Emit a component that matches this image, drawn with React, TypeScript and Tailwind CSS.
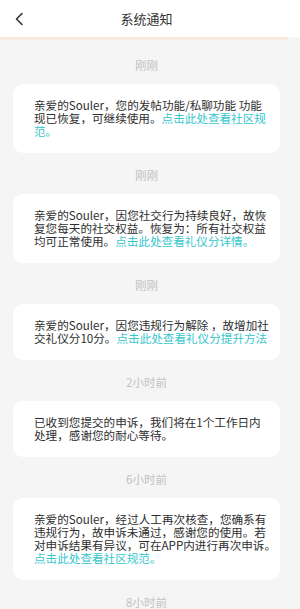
import React from "react";

type Seg = { t: string; link?: boolean };
type Line = Seg[];

const cards: { time: string; lines: Line[] }[] = [
  {
    time: "刚刚",
    lines: [
      [{ t: "亲爱的Souler，您的发帖功能/私聊功能 功能" }],
      [{ t: "现已恢复，可继续使用。" }, { t: "点击此处查看社区规", link: true }],
      [{ t: "范。", link: true }],
    ],
  },
  {
    time: "刚刚",
    lines: [
      [{ t: "亲爱的Souler，因您社交行为持续良好，故恢" }],
      [{ t: "复您每天的社交权益。恢复为：所有社交权益" }],
      [{ t: "均可正常使用。" }, { t: "点击此处查看礼仪分详情。", link: true }],
    ],
  },
  {
    time: "刚刚",
    lines: [
      [{ t: "亲爱的Souler，因您违规行为解除 ，故增加社" }],
      [{ t: "交礼仪分10分。" }, { t: "点击此处查看礼仪分提升方法", link: true }],
    ],
  },
  {
    time: "2小时前",
    lines: [
      [{ t: "已收到您提交的申诉，我们将在1个工作日内" }],
      [{ t: "处理，感谢您的耐心等待。" }],
    ],
  },
  {
    time: "6小时前",
    lines: [
      [{ t: "亲爱的Souler，经过人工再次核查，您确系有" }],
      [{ t: "违规行为，故申诉未通过，感谢您的使用。若" }],
      [{ t: "对申诉结果有异议，可在APP内进行再次申诉。" }],
      [{ t: "点击此处查看社区规范。", link: true }],
    ],
  },
];

const font = { fontFamily: '"Noto Sans CJK SC", "Noto Sans", sans-serif' };

export default function App() {
  return (
    <div
      className="w-[300px] h-[609px] overflow-hidden bg-[#f5f5f5]"
      style={font}
    >
      <div className="w-[300px] h-[37px] bg-white flex items-center relative">
        <div className="w-[293px] h-[37px] flex items-center justify-center">
          <span className="text-[13px] leading-[13px] text-[#333333]">系统通知</span>
        </div>
        <svg
          className="absolute left-[13px] top-[12px]"
          width="12"
          height="14"
          viewBox="0 0 12 14"
          fill="none"
        >
          <polyline
            points="9,1.5 3.5,7 9,12.5"
            stroke="#333333"
            strokeWidth="1.6"
            strokeLinecap="round"
            strokeLinejoin="round"
          />
        </svg>
      </div>
      <div className="w-[288px] h-[4px] bg-gradient-to-b from-[#fce3d2] to-[#f5f5f5]" />
      <div className="w-[293px] flex flex-col pt-[18px]">
        {cards.map((c, i) => (
          <div key={i} className={i === 0 ? "flex flex-col" : "flex flex-col mt-[16px]"}>
            <div className="h-[12px] leading-[12px] text-center text-[11.5px] text-[#c2c2c2]">
              {c.time}
            </div>
            <div className="mt-[13px] mx-[13px] bg-white rounded-[10px] pl-[21px] pr-[8px] py-[15px]">
              {c.lines.map((ln, j) => (
                <div
                  key={j}
                  className="whitespace-nowrap text-[11.6px] leading-[13px] text-[#2e2e2e]"
                >
                  {ln.map((s, k) =>
                    s.link ? (
                      <span key={k} className="text-[#35c6cd]">
                        {s.t}
                      </span>
                    ) : (
                      <span key={k}>{s.t}</span>
                    )
                  )}
                </div>
              ))}
            </div>
          </div>
        ))}
        <div className="mt-[16px] h-[12px] leading-[12px] text-center text-[11.5px] text-[#c2c2c2]">
          8小时前
        </div>
      </div>
    </div>
  );
}
